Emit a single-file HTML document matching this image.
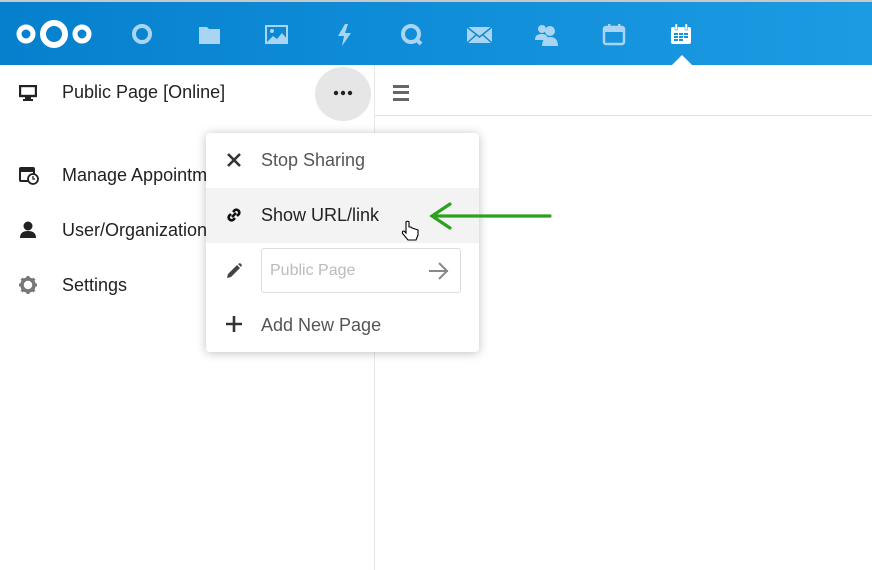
<!DOCTYPE html><html><head><style>
*{margin:0;padding:0;box-sizing:border-box}
body{width:872px;height:570px;overflow:hidden;background:#fff;font-family:"Liberation Sans",sans-serif;position:relative;color:#222}
.top{position:absolute;left:0;top:0;width:872px;height:65px;background:linear-gradient(90deg,#0580cd,#1c9be3);border-top:2px solid #c8c8c8}
.ic{position:absolute;top:20px}
.side{position:absolute;left:0;top:65px;width:375px;height:505px;border-right:1px solid #e8e8e8}
.it{position:absolute;left:62px;font-size:18px;color:#222}
.menu{position:absolute;left:206px;top:133px;width:273px;height:219px;background:#fff;border-radius:4px;box-shadow:0 1px 10px rgba(0,0,0,.25)}
.mi{position:absolute;left:0;width:273px;height:55px;font-size:18px;color:#555}
.mi span{position:absolute;left:55px;top:17px}
</style></head><body>
<div class="top">
<svg class="ic" style="left:14px;top:16px" width="80" height="34"><circle cx="12" cy="16" r="7" fill="none" stroke="#fff" stroke-width="5"/><circle cx="40" cy="16" r="11" fill="none" stroke="#fff" stroke-width="6"/><circle cx="68" cy="16" r="7" fill="none" stroke="#fff" stroke-width="5"/></svg>
<svg class="ic" style="left:131px" width="22" height="22"><circle cx="11" cy="12" r="8" fill="none" stroke="#a9d5f2" stroke-width="4"/></svg>
<svg class="ic" style="left:198px" width="24" height="24"><path d="M1 5h8l2 2h11v15H1z" fill="#a9d5f2"/></svg>
<svg class="ic" style="left:265px" width="24" height="24"><rect x="1" y="4" width="21" height="17" fill="none" stroke="#a9d5f2" stroke-width="2"/><circle cx="7" cy="9" r="2" fill="#a9d5f2"/><path d="M2 20l6-6 4 3 5-6 5 6v3z" fill="#a9d5f2"/></svg>
<svg class="ic" style="left:335px" width="20" height="26"><path d="M10 2L3 14h6l-2 10 9-13h-6l3-9z" fill="#a9d5f2"/></svg>
<svg class="ic" style="left:399px" width="26" height="26"><circle cx="12" cy="12" r="8" fill="none" stroke="#a9d5f2" stroke-width="4"/><path d="M17 17l5 5" stroke="#a9d5f2" stroke-width="4"/></svg>
<svg class="ic" style="left:466px;top:24px" width="27" height="18"><rect x="1" y="1" width="25" height="16" fill="#a9d5f2"/><path d="M1 1l12.5 10L26 1M1 17l9-8M26 17l-9-8" stroke="#0c8ad6" stroke-width="1.5" fill="none"/></svg>
<svg class="ic" style="left:533px" width="28" height="26"><circle cx="9" cy="7" r="4" fill="#a9d5f2"/><path d="M2 18c0-5 3-6 7-6s6 2 6 6z" fill="#a9d5f2"/><circle cx="17" cy="9" r="5" fill="#a9d5f2"/><path d="M9 24c0-7 4-9 8-9s8 2 8 9z" fill="#a9d5f2"/></svg>
<svg class="ic" style="left:602px" width="26" height="26"><rect x="2" y="5" width="20" height="17" rx="2" fill="none" stroke="#a9d5f2" stroke-width="2.5"/><rect x="2" y="5" width="20" height="5" fill="#a9d5f2"/><rect x="6" y="2" width="2.5" height="6" fill="#a9d5f2"/><rect x="16" y="2" width="2.5" height="6" fill="#a9d5f2"/></svg>
<svg class="ic" style="left:669px" width="26" height="26"><rect x="2" y="5" width="20" height="17" rx="2" fill="#fff"/><rect x="6" y="2" width="2.5" height="6" fill="#fff" stroke="#1593dc" stroke-width=".5"/><rect x="16" y="2" width="2.5" height="6" fill="#fff" stroke="#1593dc" stroke-width=".5"/><g fill="#1593dc"><rect x="5" y="11" width="4" height="2"/><rect x="10" y="11" width="4" height="2"/><rect x="15" y="11" width="4" height="2"/><rect x="5" y="14" width="4" height="2"/><rect x="10" y="14" width="4" height="2"/><rect x="15" y="14" width="4" height="2"/><rect x="5" y="17" width="4" height="2"/><rect x="10" y="17" width="4" height="2"/></g></svg>
<svg style="position:absolute;left:670px;top:53px" width="24" height="12"><path d="M0 12L12 0l12 12z" fill="#fff"/></svg>
</div>
<div class="side">
<svg style="position:absolute;left:19px;top:20px" width="18" height="16"><rect x="1" y="1" width="16" height="10" fill="none" stroke="#222" stroke-width="2.4"/><rect x="6" y="12" width="6" height="2" fill="#222"/><rect x="4" y="14" width="10" height="2" fill="#222"/></svg>
<div class="it" style="top:17px">Public Page [Online]</div>
<div style="position:absolute;left:315px;top:2px;width:56px;height:54px;border-radius:50%;background:#e6e6e6"></div>
<svg style="position:absolute;left:333px;top:25px" width="20" height="6"><circle cx="3" cy="3" r="2.2" fill="#222"/><circle cx="10" cy="3" r="2.2" fill="#222"/><circle cx="17" cy="3" r="2.2" fill="#222"/></svg>
<svg style="position:absolute;left:19px;top:100px" width="20" height="20"><rect x="1" y="3" width="14" height="13" rx="1" fill="none" stroke="#222" stroke-width="2"/><rect x="1" y="3" width="14" height="4" fill="#222"/><circle cx="14" cy="14" r="5" fill="#fff" stroke="#222" stroke-width="1.8"/><path d="M14 11v3h2" stroke="#222" stroke-width="1.3" fill="none"/></svg>
<div class="it" style="top:100px">Manage Appointm</div>
<svg style="position:absolute;left:20px;top:156px" width="16" height="18"><circle cx="8" cy="5" r="4.5" fill="#222"/><path d="M0 17c0-5 3-7 8-7s8 2 8 7z" fill="#222"/></svg>
<div class="it" style="top:155px">User/Organization</div>
<svg style="position:absolute;left:19px;top:211px" width="18" height="18" viewBox="0 0 18 18"><circle cx="9" cy="9" r="6" fill="none" stroke="#777" stroke-width="3.5"/><g stroke="#777" stroke-width="3"><path d="M9 0v4M9 14v4M0 9h4M14 9h4M2.6 2.6l2.8 2.8M12.6 12.6l2.8 2.8M2.6 15.4l2.8-2.8M12.6 5.4l2.8-2.8"/></g></svg>
<div class="it" style="top:210px">Settings</div>
</div>
<div style="position:absolute;left:375px;top:115px;width:497px;height:1px;background:#e0e0e0"></div>
<div style="position:absolute;left:393px;top:85px;width:16px;height:16px;border-top:3px solid #666;border-bottom:3px solid #666"><div style="margin-top:2.5px;height:3px;background:#666"></div></div>
<svg style="position:absolute;left:332px;top:121px" width="22" height="12"><path d="M0 12L11 1l11 11z" fill="#fff"/></svg>
<div class="menu">
<div class="mi" style="top:0"><svg style="position:absolute;left:21px;top:20px" width="14" height="14"><path d="M1 1l12 12M13 1L1 13" stroke="#333" stroke-width="2.6"/></svg><span>Stop Sharing</span></div>
<div class="mi" style="top:55px;background:#f3f3f3;color:#222"><svg style="position:absolute;left:19px;top:18px" width="18" height="18"><g fill="none" stroke="#111" stroke-width="2.6"><path d="M8 6l2-2a3 3 0 014 4l-2 2"/><path d="M10 12l-2 2a3 3 0 01-4-4l2-2"/><path d="M7 11l4-4"/></g></svg><span>Show URL/link</span></div>
<div class="mi" style="top:110px"><svg style="position:absolute;left:20px;top:19px" width="17" height="17"><path d="M1 16l1-4 9-9 3 3-9 9z" fill="#444"/><path d="M12 2l2-1 2 2-1 2z" fill="#444"/></svg>
<div style="position:absolute;left:55px;top:5px;width:200px;height:45px;border:1px solid #ddd;border-radius:3px"><span style="position:absolute;left:8px;top:13px;font-size:16px;color:#bbb">Public Page</span><svg style="position:absolute;left:166px;top:12px" width="22" height="20"><path d="M1 10h19M11 2l8 8-8 8" stroke="#888" stroke-width="2" fill="none"/></svg></div></div>
<div class="mi" style="top:165px"><svg style="position:absolute;left:20px;top:18px" width="16" height="16"><path d="M8 0v16M0 8h16" stroke="#333" stroke-width="2.6"/></svg><span>Add New Page</span></div>
</div>
<svg style="position:absolute;left:400px;top:220px" width="20" height="24"><path d="M6 2v11l-2-2c-2 0-2 2-1 3l5 6h8l2-5v-5l-3-1-3-1-1-1h-2V2c0-1-3-1-3 0z" fill="#fff" stroke="#000" stroke-width="1.1"/></svg>
<svg style="position:absolute;left:428px;top:200px" width="125" height="32"><path d="M122 16H5M22 4L4 16l18 12" stroke="#2ca11e" stroke-width="3.2" fill="none" stroke-linecap="round"/></svg>
</body></html>
